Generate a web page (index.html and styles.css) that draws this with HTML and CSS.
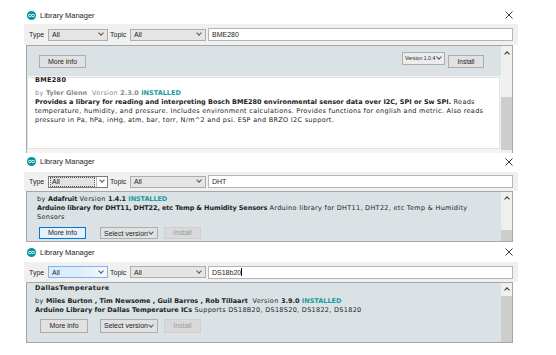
FILE: index.html
```html
<!DOCTYPE html>
<html lang="en">
<head>
    <meta charset="UTF-8">
    <title>Library Manager</title>
    <link rel="stylesheet" href="styles.css">
</head>
<body>
    <!-- BME280 -->
    <div class="win w1">
        <div class="titlebar">
            <svg class="logo" viewBox="0 0 10 10"><circle cx="5" cy="5" r="5" fill="#00979d"/><ellipse cx="3.3" cy="5" rx="1.6" ry="1.3" fill="none" stroke="#fff" stroke-width="0.9"/><ellipse cx="6.7" cy="5" rx="1.6" ry="1.3" fill="none" stroke="#fff" stroke-width="0.9"/></svg>
            <span class="title">Library Manager</span>
            <svg class="close" viewBox="0 0 8 8"><path d="M0.5 0.5L7.5 7.5M7.5 0.5L0.5 7.5" stroke="#222" stroke-width="0.9"/></svg>
        </div>
        <div class="filters">
            <span class="lbl">Type</span>
            <div class="combo type"><span>All</span><i class="caret"></i></div>
            <span class="lbl topic-lbl">Topic</span>
            <div class="combo topic"><span>All</span><i class="caret"></i></div>
            <div class="search">BME280</div>
        </div>
        <div class="list">
            <div class="items">
                <div class="item sel">
                    <div class="btn">More info</div>
                    <div class="combo ver"><span>Version 1.0.4</span><i class="caret"></i></div>
                    <div class="btn install">Install</div>
                </div>
                <div class="card">
                    <div class="name">BME280</div>
                    <div class="meta muted">by <b>Tyler Glenn</b>&nbsp; Version <b>2.3.0</b> <b class="ok">INSTALLED</b></div>
                    <div class="desc"><b>Provides a library for reading and interpreting Bosch BME280 environmental sensor data over I2C, SPI or Sw SPI.</b> Reads<br>temperature, humidity, and pressure. Includes environment calculations. Provides functions for english and metric. Also reads<br>pressure in Pa, hPa, inHg, atm, bar, torr, N/m^2 and psi. ESP and BRZO I2C support.</div>
                </div>
            </div>
            <div class="scroll">
                <div class="up"><i class="chev"></i></div>
                <div class="thumb"></div>
            </div>
        </div>
    </div>

    <!-- DHT -->
    <div class="win w2">
        <div class="titlebar">
            <svg class="logo" viewBox="0 0 10 10"><circle cx="5" cy="5" r="5" fill="#00979d"/><ellipse cx="3.3" cy="5" rx="1.6" ry="1.3" fill="none" stroke="#fff" stroke-width="0.9"/><ellipse cx="6.7" cy="5" rx="1.6" ry="1.3" fill="none" stroke="#fff" stroke-width="0.9"/></svg>
            <span class="title">Library Manager</span>
            <svg class="close" viewBox="0 0 8 8"><path d="M0.5 0.5L7.5 7.5M7.5 0.5L0.5 7.5" stroke="#222" stroke-width="0.9"/></svg>
        </div>
        <div class="filters">
            <span class="lbl">Type</span>
            <div class="combo type focus"><span class="val">All</span><span class="arrow"><i class="caret"></i></span></div>
            <span class="lbl topic-lbl">Topic</span>
            <div class="combo topic"><span>All</span><i class="caret"></i></div>
            <div class="search">DHT</div>
        </div>
        <div class="list">
            <div class="items">
                <div class="item sel">
                    <div class="meta">by <b>Adafruit</b> Version <b>1.4.1</b> <b class="ok">INSTALLED</b></div>
                    <div class="desc"><b>Arduino library for DHT11, DHT22, etc Temp &amp; Humidity Sensors</b> Arduino library for DHT11, DHT22, etc Temp &amp; Humidity<br>Sensors</div>
                    <div class="actions">
                        <div class="btn focus">More info</div>
                        <div class="combo pick"><span>Select version</span><i class="caret"></i></div>
                        <div class="btn off">Install</div>
                    </div>
                </div>
            </div>
            <div class="scroll">
                <div class="up"><i class="chev"></i></div>
                <div class="thumb"></div>
            </div>
        </div>
    </div>

    <!-- DS18b20 -->
    <div class="win w3">
        <div class="titlebar">
            <svg class="logo" viewBox="0 0 10 10"><circle cx="5" cy="5" r="5" fill="#00979d"/><ellipse cx="3.3" cy="5" rx="1.6" ry="1.3" fill="none" stroke="#fff" stroke-width="0.9"/><ellipse cx="6.7" cy="5" rx="1.6" ry="1.3" fill="none" stroke="#fff" stroke-width="0.9"/></svg>
            <span class="title">Library Manager</span>
            <svg class="close" viewBox="0 0 8 8"><path d="M0.5 0.5L7.5 7.5M7.5 0.5L0.5 7.5" stroke="#222" stroke-width="0.9"/></svg>
        </div>
        <div class="filters">
            <span class="lbl">Type</span>
            <div class="combo type hover"><span>All</span><i class="caret"></i></div>
            <span class="lbl topic-lbl">Topic</span>
            <div class="combo topic"><span>All</span><i class="caret"></i></div>
            <div class="search">DS18b20<span class="cursor"></span></div>
        </div>
        <div class="list">
            <div class="items">
                <div class="item sel">
                    <div class="name">DallasTemperature</div>
                    <div class="meta">by <b>Miles Burton , Tim Newsome , Guil Barros , Rob Tillaart</b>&nbsp; Version <b>3.9.0</b> <b class="ok">INSTALLED</b></div>
                    <div class="desc"><b>Arduino Library for Dallas Temperature ICs</b> Supports DS18B20, DS18S20, DS1822, DS1820</div>
                    <div class="actions">
                        <div class="btn">More info</div>
                        <div class="combo pick"><span>Select version</span><i class="caret"></i></div>
                        <div class="btn off">Install</div>
                    </div>
                </div>
            </div>
            <div class="scroll">
                <div class="up"><i class="chev"></i></div>
                <div class="thumb"></div>
            </div>
        </div>
    </div>
</body>
</html>
```

FILE: styles.css
```css
body{
    margin: 0;
    background: #fff;
    font-family: "Liberation Sans", Arial, sans-serif;
    color: #1e1e1e;
}
.win{
    width: 494px;
    margin-left: 24px;
}
.titlebar{
    display: flex;
    align-items: center;
    height: 24px;
    padding: 6px 5px 0 3px;
    box-sizing: border-box;
}
.w2 .titlebar{
    height: 19px;
    padding-top: 0;
    padding-bottom: 2px;
}
.w3 .titlebar{
    height: 20px;
    padding-top: 0;
}
.logo{
    width: 9px;
    height: 9px;
    margin-right: 4px;
}
.title{
    flex: 1;
    font-size: 7.5px;
    color: #222;
}
.close{
    width: 8px;
    height: 8px;
}

/* filter bar */
.filters{
    display: flex;
    align-items: center;
    height: 21px;
    padding: 0 5px;
    background: #f0f0f0;
    font-size: 7px;
}
.w2 .filters{ height: 19px; }
.w3 .filters{ height: 20px; }
.lbl{
    width: 19px;
}
.topic-lbl{
    width: 20px;
    margin-left: 2px;
}
.combo{
    display: flex;
    align-items: center;
    justify-content: space-between;
    box-sizing: border-box;
    height: 12px;
    padding: 0 4px 0 3px;
    border: 1px solid #adadad;
    background: #e5e5e5;
    font-size: 7px;
    white-space: nowrap;
}
.type{ width: 60px; }
.topic{ width: 76px; }
.combo.focus{
    padding: 0;
    background: #fff;
    border-color: #7a7a7a;
}
.combo.focus .val{
    flex: 1;
    height: 8px;
    line-height: 8px;
    margin: 1px;
    padding-left: 1px;
    border: 1px dotted #555;
    background: #e2e2e2;
}
.combo.focus .arrow{
    display: flex;
    align-items: center;
    justify-content: center;
    width: 10px;
    height: 10px;
    border-left: 1px solid #bbb;
}
.combo.hover{
    background: linear-gradient(90deg, #dcecfc 45%, #f4f8fc);
    border-color: #7eb4ea;
}
.caret{
    width: 3px;
    height: 3px;
    margin-top: -3px;
    border-right: 1px solid #555;
    border-bottom: 1px solid #555;
    transform: rotate(45deg);
}
.search{
    flex: 1;
    height: 13px;
    margin-left: 2px;
    padding-left: 3px;
    box-sizing: border-box;
    border: 1px solid #b5b5b5;
    background: #fff;
    font-size: 7px;
    line-height: 11px;
}
.cursor{
    display: inline-block;
    width: 1px;
    height: 8px;
    vertical-align: -1px;
    background: #000;
}

/* list */
.list{
    display: flex;
    margin: 0 5px 0 2px;
    border: 1px solid #a6a6a6;
    background: #f4f4f4;
    font-family: "DejaVu Sans", Verdana, sans-serif;
    font-size: 6.5px;
    line-height: 9px;
    letter-spacing: 0.3px;
    white-space: nowrap;
}
.list b{
    letter-spacing: 0;
}
.w1 .list{
    height: 107px;
    border-bottom: none;
}
.w2 .list{ height: 49px; }
.w3 .list{ height: 59px; }
.items{
    flex: 1;
    min-width: 0;
    overflow: hidden;
}
.item{
    box-sizing: border-box;
    background: #dbe2e5;
}
.w1 .item{
    display: flex;
    align-items: center;
    height: 30px;
    padding: 0 17px 0 12px;
}
.w2 .item{
    height: 49px;
    padding: 3px 0 0 10px;
}
.w2 .list b{
    letter-spacing: -0.1px;
}
.w3 .item{
    height: 59px;
    padding: 1px 0 0 8px;
}
.card{
    height: 72px;
    margin: 1px 1px 0 0;
    padding-left: 7px;
    box-sizing: border-box;
    border: 1px solid #e2e2e2;
    background: #fff;
}
.name{
    font-weight: bold;
    color: #222;
}
.card .name{
    line-height: 7px;
    margin-top: -1px;
}
.card .meta{
    margin-top: 5px;
}
.w3 .meta{
    margin-top: 4px;
}
.muted{
    color: #8a8a8a;
}
.ok{
    color: #1a9aa0;
}
.desc{
    color: #222;
}

/* buttons */
.btn{
    box-sizing: border-box;
    height: 13px;
    border: 1px solid #adadad;
    background: #e1e1e1;
    font-family: "Liberation Sans", Arial, sans-serif;
    font-size: 7px;
    line-height: 11px;
    letter-spacing: 0;
    text-align: center;
    color: #222;
}
.w1 .btn{
    width: 47px;
}
.w1 .btn.install{
    width: 36px;
    margin-left: 3px;
    font-size: 6.5px;
}
.combo.ver{
    width: 43px;
    height: 13px;
    margin: -6px 0 0 auto;
    padding: 0 3px 0 2px;
    background: #ececec;
    font-family: "Liberation Sans", Arial, sans-serif;
    font-size: 5.2px;
    letter-spacing: 0;
}
.actions{
    display: flex;
    align-items: center;
    margin: 5px 0 0 2px;
    letter-spacing: 0;
}
.w3 .actions{
    margin: 4px 0 0 5px;
}
.actions .btn{
    width: 47px;
    height: 12px;
    line-height: 10px;
}
.w3 .actions .btn, .w3 .combo.pick{
    width: 48px;
    height: 14px;
    line-height: 12px;
}
.combo.pick{
    width: 58px;
    margin-left: 14px;
    background: #e1e1e1;
    font-family: "Liberation Sans", Arial, sans-serif;
}
.w3 .combo.pick{
    width: 58px;
    margin-left: 12px;
}
.actions .btn.off, .w3 .actions .btn.off{
    width: 37px;
    margin-left: 6px;
    border-color: #cfcfcf;
    background: #d9d9d9;
    color: #9c9c9c;
}
.btn.focus{
    border-color: #0078d7;
    background: #e5f1fb;
}

/* scrollbar */
.scroll{
    display: flex;
    flex-direction: column;
    flex-shrink: 0;
    width: 11px;
    background: #f0f0f0;
}
.up{
    display: flex;
    align-items: center;
    justify-content: center;
    height: 12px;
    flex-shrink: 0;
}
.chev{
    width: 3px;
    height: 3px;
    margin-top: 2px;
    border-left: 1px solid #333;
    border-top: 1px solid #333;
    transform: rotate(45deg);
}
.thumb{
    background: #cdcdcd;
}
.w1 .up{ height: 14px; }
.w1 .thumb{
    margin-top: 37px;
    height: 53px;
}
.w2 .thumb{
    margin-top: auto;
    height: 11px;
}
.w3 .thumb{
    margin-top: 1px;
    flex: 1;
}
```
